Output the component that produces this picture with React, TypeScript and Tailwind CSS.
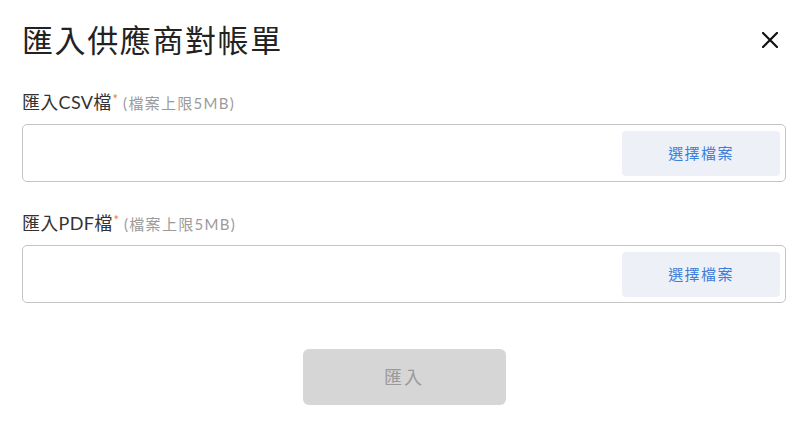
import React from "react";

const font = { fontFamily: 'Lato, "Noto Sans CJK TC", sans-serif' };

function FileField({ label }: { label: string }) {
  return (
    <div className="flex flex-col">
      <div className="flex items-baseline h-[22px]">
        <span className="text-[18px] text-[#333333] tracking-[0.3px]">{label}</span>
        <span className="text-[13px] text-[#f2773a] self-start mt-[1px] ml-[1px]">*</span>
        <span className="text-[15px] text-[#9b9b9b] ml-[5px] tracking-[1.3px]">(檔案上限5MB)</span>
      </div>
      <div className="mt-[13px] h-[58px] border border-[#c4c4c4] rounded-[5px] flex justify-end items-center pr-[5px]">
        <button className="w-[158px] h-[45px] bg-[#eef0f7] rounded-[4px] text-[15px] text-[#3d7ed8] tracking-[1.4px]">
          選擇檔案
        </button>
      </div>
    </div>
  );
}

export default function App() {
  return (
    <div className="w-[812px] h-[422px] bg-white relative" style={font}>
      <div className="pl-[22px] pr-[26px] pt-[18px]">
        <div className="flex items-center justify-between">
          <h1 className="text-[31px] text-[#222222] tracking-[1.6px] leading-[44px]">匯入供應商對帳單</h1>
          <svg width="16" height="16" viewBox="0 0 16 16" className="mr-[8px]">
            <path d="M1 1L15 15M15 1L1 15" stroke="#111" strokeWidth="2.2" strokeLinecap="square" />
          </svg>
        </div>
        <div className="mt-[27px] flex flex-col gap-[28px]">
          <FileField label="匯入CSV檔" />
          <FileField label="匯入PDF檔" />
        </div>
        <div className="flex justify-center mt-[46px]">
          <button className="w-[203px] h-[56px] bg-[#d6d6d6] rounded-[6px] text-[18px] text-[#9a9a9a] tracking-[2px]">
            匯入
          </button>
        </div>
      </div>
    </div>
  );
}
